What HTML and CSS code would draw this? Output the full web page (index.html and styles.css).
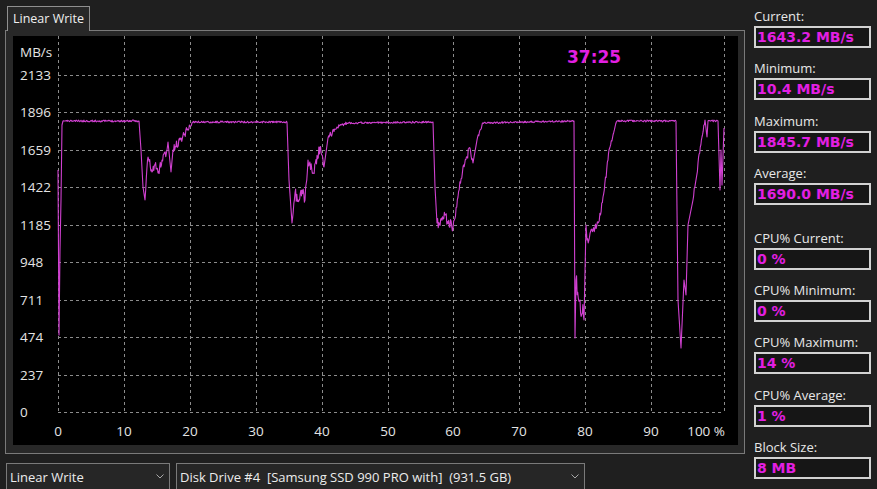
FILE: index.html
```html
<!DOCTYPE html>
<html lang="en">
<head>
<meta charset="UTF-8">
<title>Linear Write</title>
<link rel="stylesheet" href="styles.css">
</head>
<body>
<div class="app">
  <div class="main">
    <div class="tabs">
      <div class="tab">Linear Write</div>
    </div>
    <div class="panel">
      <svg id="chart" class="chart" width="725" height="409" viewBox="13 36 725 409">
        <g id="grid"></g>
        <g id="labels" class="axis"></g>
        <text class="timer" x="567" y="63">37:25</text>
        <polyline id="trace" class="trace" points=""></polyline>
      </svg>
    </div>
    <div class="selects">
      <div class="select sel-test">
        <span>Linear Write</span>
        <svg class="chev" width="8" height="5" viewBox="0 0 8 5"><polyline points="0.5,0.5 4,4 7.5,0.5"/></svg>
      </div>
      <div class="select sel-drive">
        <span class="drive">Disk Drive #4  [Samsung SSD 990 PRO with]  (931.5 GB)</span>
        <svg class="chev" width="8" height="5" viewBox="0 0 8 5"><polyline points="0.5,0.5 4,4 7.5,0.5"/></svg>
      </div>
    </div>
  </div>

  <div class="stats">
    <div class="stat"><div class="label">Current:</div><div class="val">1643.2 MB/s</div></div>
    <div class="stat"><div class="label">Minimum:</div><div class="val">10.4 MB/s</div></div>
    <div class="stat"><div class="label">Maximum:</div><div class="val">1845.7 MB/s</div></div>
    <div class="stat"><div class="label">Average:</div><div class="val">1690.0 MB/s</div></div>
    <div class="stat cpu-first"><div class="label">CPU% Current:</div><div class="val">0 %</div></div>
    <div class="stat"><div class="label">CPU% Minimum:</div><div class="val">0 %</div></div>
    <div class="stat"><div class="label">CPU% Maximum:</div><div class="val">14 %</div></div>
    <div class="stat"><div class="label">CPU% Average:</div><div class="val">1 %</div></div>
    <div class="stat"><div class="label">Block Size:</div><div class="val">8 MB</div></div>
  </div>
</div>

<script>
const NS = 'http://www.w3.org/2000/svg';

function add(parent, tag, attrs, text) {
    const el = document.createElementNS(NS, tag);
    for (const k in attrs) el.setAttribute(k, attrs[k]);
    if (text !== undefined) el.textContent = text;
    parent.appendChild(el);
    return el;
}

// grid
const grid = document.getElementById('grid');
const labels = document.getElementById('labels');
const xs = [58, 124, 190, 256, 322, 388, 453, 519, 585, 651, 724];
const yTicks = ['2133', '1896', '1659', '1422', '1185', '948', '711', '474', '237', '0'];

xs.forEach(x => {
    add(grid, 'line', { x1: x + 0.5, y1: 36, x2: x + 0.5, y2: 412, class: 'grid' });
});
yTicks.forEach((t, i) => {
    const y = Math.round(75 + i * 37.44) + 0.5;
    add(grid, 'line', { x1: 58, y1: y, x2: 724, y2: y, class: 'grid' });
    add(labels, 'text', { x: 20, y: Math.round(75 + i * 37.44) + 5 }, t);
});
add(labels, 'text', { x: 20, y: 57 }, 'MB/s');
for (let i = 0; i < 10; i++) {
    add(labels, 'text', { x: xs[i], y: 436, 'text-anchor': 'middle' }, String(i * 10));
}
add(labels, 'text', { x: 725, y: 436, 'text-anchor': 'end' }, '100 %');

// speed trace: [x, y, noise]
const pts = [
    [58,170,0],[59,335,0],[60,250,0],[61,200,0],[62,125,0],[63,121,1.8],
    [139,121,0],[141,150,0],[143,187,0],[145,200,9],[147,167,9],[148,157,10],[152,172,10],[155,165,10],[158,173,10],[162,160,10],[167,150,6],[168,142,0],[171,172,0],[173,150,8],[180,140,8],[187,130,4],[193,122,1.8],
    [287,122,0],[289,180,0],[292,223,6],[295,193,11],[298,200,11],[302,190,11],[305,200,10],[308,160,10],[313,173,10],[320,147,8],[324,167,0],[328,138,6],[337,127,3],[347,123,1.8],
    [433,122,0],[435,187,0],[437,223,12],[445,215,13],[453,228,9],[458,197,9],[463,167,8],[470,148,6],[473,163,0],[477,140,4],[483,123,1.8],
    [574,121,0],[575,338,0],[576,280,22],[580,300,22],[584,320,0],[586,225,0],[587,240,10],[593,230,10],[598,223,10],[603,197,8],[608,160,6],[609,150,0],[610,147,4],[615,127,3],[617,121,1.8],
    [676,121,0],[678,300,0],[681,348,0],[684,280,0],[686,295,0],[688,225,0],[693,200,8],[698,163,8],[702,137,4],[705,120,1.8],[707,137,0],[708,121,1.8],
    [718,121,0],[720,190,0],[721,150,0],[722,185,0],[724,128,0]
];

let seed = 11;
function rnd() {
    seed = (seed * 16807) % 2147483647;
    return seed / 2147483647;
}

const out = [];
for (let k = 0; k < pts.length - 1; k++) {
    const [x0, y0, a] = pts[k];
    const [x1, y1] = pts[k + 1];
    const steps = Math.max(1, Math.round((x1 - x0) / 0.6));
    for (let s = 0; s < steps; s++) {
        const t = s / steps;
        const y = y0 + (y1 - y0) * t + (s ? (rnd() - 0.5) * a : 0);
        out.push((x0 + (x1 - x0) * t).toFixed(2) + ',' + y.toFixed(2));
    }
}
const last = pts[pts.length - 1];
out.push(last[0] + ',' + last[1]);
document.getElementById('trace').setAttribute('points', out.join(' '));
</script>
</body>
</html>
```

FILE: styles.css
```css
body {
  margin: 0;
  overflow: hidden;
  background-color: #1f1f1f;
  font-family: "Open Sans", "Noto Sans", sans-serif;
  color: #e6e6e6;
}
.app {
  display: flex;
  height: 489px;
}
.main {
  margin-left: 5px;
  width: 740px;
}
.tabs {
  display: flex;
  padding-top: 6px;
  padding-left: 2px;
}
.tab {
  position: relative;
  z-index: 1;
  box-sizing: border-box;
  width: 83px;
  height: 25px;
  margin-bottom: -1px;
  padding-left: 5px;
  border: 1px solid #8f8f8f;
  border-bottom: none;
  background-color: #282828;
  font-size: 12.5px;
  line-height: 23px;
  color: #f0f0f0;
}
.panel {
  border: 1px solid #7a7a7a;
  background-color: #282828;
  padding: 5px 6px 8px 7px;
}
.chart {
  display: block;
  background-color: #000;
}
.grid {
  stroke: #8c8c8c;
  stroke-width: 1;
  stroke-dasharray: 3 3;
}
.axis text {
  font-family: "Open Sans", sans-serif;
  font-size: 13.5px;
  fill: #e4e4e4;
}
.timer {
  font-family: "DejaVu Sans", Verdana, sans-serif;
  font-weight: bold;
  font-size: 17px;
  fill: #e21fe2;
}
.trace {
  fill: none;
  stroke: #d040d0;
  stroke-width: 1.1;
  stroke-linejoin: round;
}

/* bottom combo boxes */
.selects {
  display: flex;
  gap: 6px;
  margin-top: 9px;
}
.select {
  box-sizing: border-box;
  height: 28px;
  display: flex;
  align-items: center;
  justify-content: space-between;
  padding: 0 5px 1px 3px;
  border: 1px solid #7a7a7a;
  background-color: #262626;
  font-size: 13px;
  color: #ececec;
}
.sel-test {
  width: 164px;
  margin-left: 1px;
}
.sel-drive {
  width: 409px;
}
.drive {
  white-space: pre;
}
.chev polyline {
  fill: none;
  stroke: #a8a8a8;
  stroke-width: 1;
}

/* right column */
.stats {
  margin-left: 9px;
  padding-top: 7px;
  width: 117px;
}
.stat {
  margin-bottom: 11.3px;
}
.stat.cpu-first {
  margin-top: 24px;
}
.label {
  height: 19px;
  font-size: 13px;
  line-height: 19px;
  color: #e8e8e8;
}
.val {
  box-sizing: border-box;
  height: 22px;
  padding-left: 1px;
  border: 2px solid #d2d2d2;
  background-color: #161616;
  font-family: "DejaVu Sans", Verdana, sans-serif;
  font-weight: bold;
  font-size: 14px;
  line-height: 18px;
  color: #e21fe2;
}
```
